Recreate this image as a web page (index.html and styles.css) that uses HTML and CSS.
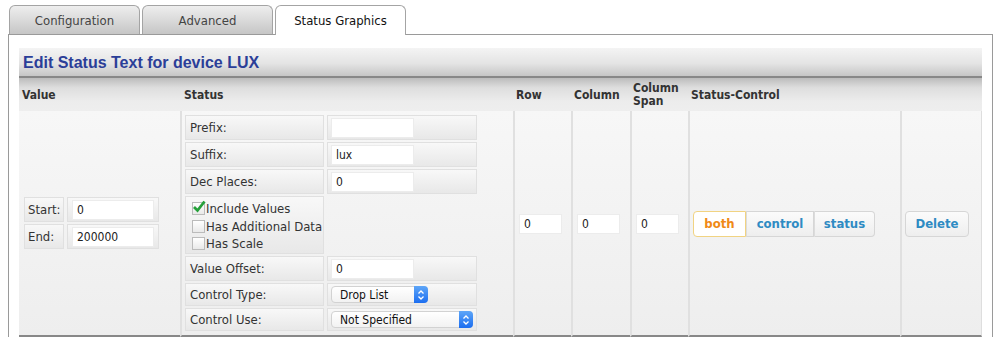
FILE: index.html
```html
<!DOCTYPE html>
<html lang="en">
<head>
    <meta charset="UTF-8">
    <title>Status Graphics</title>
    <link rel="stylesheet" href="styles.css">
</head>
<body>
    <div class="tabs">
        <div class="tab">Configuration</div>
        <div class="tab">Advanced</div>
        <div class="tab active">Status Graphics</div>
    </div>
    <div class="panel">
        <div class="title-bar">Edit Status Text for device LUX</div>
        <table class="grid">
            <thead>
                <tr>
                    <th class="c-value">Value</th>
                    <th class="c-status">Status</th>
                    <th class="c-row">Row</th>
                    <th class="c-col">Column</th>
                    <th class="c-span">Column Span</th>
                    <th class="c-ctrl">Status-Control</th>
                    <th class="c-del"></th>
                </tr>
            </thead>
            <tbody>
                <tr>
                    <td class="c-value">
                        <table class="sub value-sub">
                            <tr><td class="lbl">Start:</td><td class="val"><input type="text" class="txt" value="0"></td></tr>
                            <tr><td class="lbl">End:</td><td class="val"><input type="text" class="txt" value="200000"></td></tr>
                        </table>
                    </td>
                    <td class="c-status">
                        <table class="sub status-sub">
                            <tr><td class="lbl">Prefix:</td><td class="val"><input type="text" class="txt" value=""></td></tr>
                            <tr><td class="lbl">Suffix:</td><td class="val"><input type="text" class="txt" value="lux"></td></tr>
                            <tr><td class="lbl">Dec Places:</td><td class="val"><input type="text" class="txt" value="0"></td></tr>
                            <tr class="checks-row">
                                <td class="lbl checks">
                                    <label class="chk"><span class="box"><svg width="14" height="13" viewBox="0 0 14 13"><path d="M2 7 L5.5 10.5 L12.5 1.5" fill="none" stroke="#25a03a" stroke-width="2.8"/></svg></span>Include Values</label>
                                    <label class="chk"><span class="box"></span>Has Additional Data</label>
                                    <label class="chk"><span class="box"></span>Has Scale</label>
                                </td>
                                <td class="blank"></td>
                            </tr>
                            <tr><td class="lbl">Value Offset:</td><td class="val"><input type="text" class="txt" value="0"></td></tr>
                            <tr class="sel-row"><td class="lbl">Control Type:</td><td class="val"><span class="sel short">Drop List<span class="arrows"><svg width="8" height="12" viewBox="0 0 8 12"><path d="M1.5 4.5 L4 2 L6.5 4.5 M1.5 7.5 L4 10 L6.5 7.5" fill="none" stroke="#fff" stroke-width="1.3"/></svg></span></span></td></tr>
                            <tr class="sel-row"><td class="lbl">Control Use:</td><td class="val"><span class="sel long">Not Specified<span class="arrows"><svg width="8" height="12" viewBox="0 0 8 12"><path d="M1.5 4.5 L4 2 L6.5 4.5 M1.5 7.5 L4 10 L6.5 7.5" fill="none" stroke="#fff" stroke-width="1.3"/></svg></span></span></td></tr>
                        </table>
                    </td>
                    <td class="c-row"><input type="text" class="txt num" value="0"></td>
                    <td class="c-col"><input type="text" class="txt num" value="0"></td>
                    <td class="c-span"><input type="text" class="txt num" value="0"></td>
                    <td class="c-ctrl">
                        <div class="seg">
                            <span class="seg-btn active">both</span>
                            <span class="seg-btn">control</span>
                            <span class="seg-btn">status</span>
                        </div>
                    </td>
                    <td class="c-del"><span class="btn">Delete</span></td>
                </tr>
            </tbody>
        </table>
    </div>
</body>
</html>
```

FILE: styles.css
```css
body {
    margin: 0;
    font-family: "DejaVu Sans Condensed", "DejaVu Sans", sans-serif;
    font-size: 12px;
    color: #222;
    background-color: #fff;
    height: 339px;
    overflow: hidden;
}

.tabs {
    display: flex;
    gap: 2px;
    padding: 5px 0 0 9px;
    height: 29px;
}

.tab {
    width: 129px;
    height: 28px;
    border: 1px solid #a4a4a4;
    border-bottom: none;
    border-radius: 6px 6px 0 0;
    background: linear-gradient(#eeeeee, #c6c6c6);
    text-align: center;
    line-height: 30px;
    font-size: 13px;
    color: #444;
}

.tab.active {
    background: #fff;
    color: #111;
    height: 29px;
    position: relative;
    z-index: 1;
}

/* the panel runs on below the visible area, so no bottom border */
.panel {
    margin: 0 7px 0 8px;
    border: 1px solid #9a9a9a;
    border-bottom: none;
    padding: 13px 10px 0 10px;
}

.title-bar {
    height: 28px;
    line-height: 29px;
    padding-left: 4px;
    font-family: "Liberation Sans", Arial, sans-serif;
    font-weight: bold;
    font-size: 16px;
    color: #2b3e98;
    background: linear-gradient(#f4f4f4, #e4e4e4 55%, #c6c6c6);
    border-bottom: 2px solid #888;
}

.grid {
    width: 963px;
    border-collapse: separate;
    border-spacing: 0;
    table-layout: fixed;
}

.grid th, .grid td {
    box-sizing: border-box;
}

.grid th {
    height: 33px;
    text-align: left;
    vertical-align: middle;
    padding: 1px 3px 0 3px;
    font-size: 12px;
    font-weight: bold;
    color: #333;
    line-height: 13px;
    background: linear-gradient(#bcbcbc, #dedede 30%, #ececec 70%, #eeeeee);
}

.grid th.c-status { padding-left: 4px; }

.c-value { width: 161px; }
.c-status { width: 333px; }
.c-row { width: 58px; }
.c-col { width: 59px; }
.c-span { width: 58px; }
.c-ctrl { width: 212px; }
.c-del { width: 82px; }

.grid > tbody > tr > td {
    height: 226px;
    background: linear-gradient(#f7f7f7, #eeeeee);
    border-left: 2px solid #e0e0e0;
    border-bottom: 2px solid #888;
    padding: 0 0 0 4px;
    vertical-align: middle;
}

.grid > tbody > tr > td.c-value {
    border-left: none;
    padding-left: 2px;
}

.grid > tbody > tr > td.c-status {
    padding-left: 0;
}

.grid > tbody > tr > td.c-ctrl,
.grid > tbody > tr > td.c-del {
    padding-left: 3px;
}

.grid > tbody > tr > td.c-del {
    border-right: 1px solid #dedede;
}

.sub {
    border-collapse: separate;
    border-spacing: 3px 2px;
}

.sub td {
    box-sizing: border-box;
    border: 1px solid #e0e0e0;
    background: linear-gradient(#f8f8f8, #e8e8e8);
    font-size: 13px;
    color: #333;
    vertical-align: middle;
}

.value-sub td {
    height: 25px;
}

.value-sub td.lbl {
    width: 40px;
    padding: 0 0 0 3px;
}

.value-sub td.val {
    width: 92px;
    padding: 0 0 0 4px;
}

.value-sub .txt {
    width: 82px;
}

.status-sub td {
    height: 25px;
}

.status-sub td.lbl {
    width: 139px;
    padding: 0 0 0 4px;
}

.status-sub td.val {
    width: 150px;
    padding: 0 0 0 3px;
}

.status-sub .sel-row td {
    height: 23px;
}

.status-sub td.blank {
    background: transparent;
    border: none;
}

.status-sub td.checks {
    height: 58px;
    padding: 3px 0 0 6px;
    vertical-align: top;
}

.chk {
    display: flex;
    align-items: center;
    height: 17.5px;
}

.box {
    width: 11px;
    height: 11px;
    border: 1px solid #bbb;
    background: linear-gradient(#fff, #e9e9e9);
    margin-right: 1px;
    position: relative;
}

.box svg {
    position: absolute;
    left: -1px;
    top: -3px;
}

.txt {
    font-family: "DejaVu Sans Condensed", "DejaVu Sans", sans-serif;
    font-size: 12px;
    color: #222;
    border: 1px solid #ececec;
    background: #fff;
    height: 20px;
    box-sizing: border-box;
    padding: 0 4px;
    width: 83px;
    outline: none;
    display: block;
    margin: 0;
}

.txt.num {
    width: 43px;
    margin-top: 2px;
}

.sel {
    display: flex;
    align-items: center;
    justify-content: space-between;
    height: 17px;
    box-sizing: border-box;
    background: linear-gradient(#fff, #f2f2f2);
    border: 1px solid #d2d2d2;
    border-radius: 4px;
    padding-left: 8px;
    font-size: 12px;
    color: #111;
}

.sel.short { width: 97px; }
.sel.long { width: 142px; }

.arrows {
    width: 14px;
    height: 17px;
    margin-right: -1px;
    background: linear-gradient(#5ea6f8, #1c6ef0);
    border-radius: 0 4px 4px 0;
    display: flex;
    align-items: center;
    justify-content: center;
}

.seg {
    display: flex;
    margin-top: 2px;
}

.seg-btn {
    flex: none;
    height: 26px;
    line-height: 24px;
    box-sizing: border-box;
    text-align: center;
    font-size: 13px;
    font-weight: bold;
    color: #2e8bc3;
    background: linear-gradient(#fbfbfb, #eeeeee);
    border: 1px solid #d6d6d6;
    border-left: none;
}

.seg-btn.active {
    border: 1px solid #f1d382;
    border-radius: 4px 0 0 4px;
    color: #f08a17;
    background: #fff;
}

.seg-btn:nth-child(1) { width: 53px; }
.seg-btn:nth-child(2) { width: 68px; border-left: 1px solid #dcdcdc; }
.seg-btn:nth-child(3) { width: 61px; border-left: 1px solid #dcdcdc; border-radius: 0 4px 4px 0; }

.btn {
    display: block;
    width: 64px;
    height: 26px;
    margin-top: 2px;
    line-height: 24px;
    box-sizing: border-box;
    text-align: center;
    font-size: 13px;
    font-weight: bold;
    color: #2e8bc3;
    background: linear-gradient(#fbfbfb, #eeeeee);
    border: 1px solid #d6d6d6;
    border-radius: 4px;
}
```
